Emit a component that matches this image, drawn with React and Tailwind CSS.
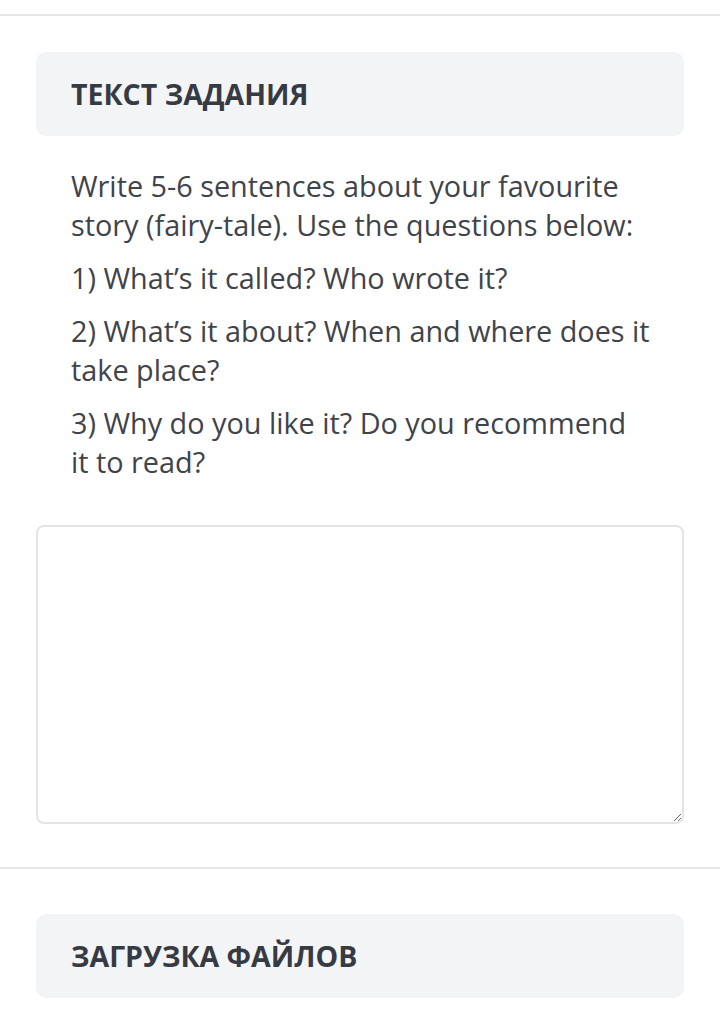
export default function App() {
  const font = { fontFamily: '"Open Sans", "Noto Sans", sans-serif' }
  return (
    <div className="min-h-screen bg-white text-[#3f434a]" style={font}>
      <div className="h-[16px] border-b-2 border-[#e7e7e7]" />

      <section className="px-9 pt-9">
        <div className="h-[84px] rounded-[10px] bg-[#f3f4f6] px-[35px] flex items-center">
          <h2 className="text-[28.5px] font-bold uppercase text-[#363a43]">Текст задания</h2>
        </div>

        <div className="pl-[35px] pt-[30px] text-[28.8px] leading-[39px] whitespace-nowrap">
          <p className="mb-[14px]">
            Write 5-6 sentences about your favourite<br />
            story (fairy-tale). Use the questions below:
          </p>
          <p className="mb-[14px]">1) What’s it called? Who wrote it?</p>
          <p className="mb-[14px]">
            2) What’s it about? When and where does it<br />
            take place?
          </p>
          <p>
            3) Why do you like it? Do you recommend<br />
            it to read?
          </p>
        </div>

        <textarea
          className="mt-[44px] block w-full h-[299px] rounded-lg border-2 border-[#e4e4e4] bg-white outline-none"
          aria-label="answer"
        />
      </section>

      <div className="mt-[43px] border-t-2 border-[#e7e7e7]" />

      <section className="px-9 pt-[45px] pb-6">
        <div className="h-[84px] rounded-[10px] bg-[#f3f4f6] px-[35px] flex items-center">
          <h2 className="text-[28.5px] font-bold uppercase text-[#363a43]">Загрузка файлов</h2>
        </div>
      </section>
    </div>
  )
}
